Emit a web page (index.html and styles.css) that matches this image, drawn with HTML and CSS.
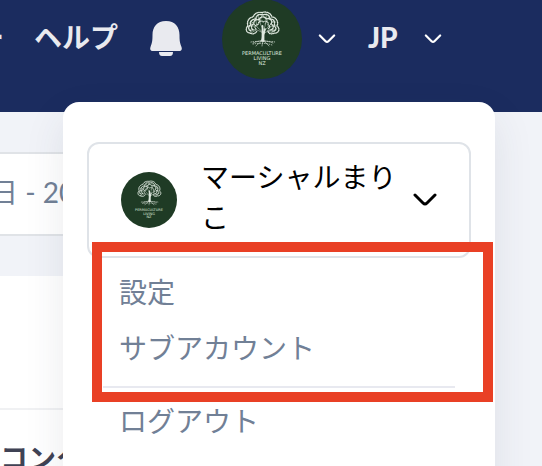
FILE: index.html
```
<!DOCTYPE html>
<html lang="ja">
<head>
    <meta charset="UTF-8">
    <meta name="viewport" content="width=device-width, initial-scale=1.0">
    <title>アカウント</title>
    <link rel="stylesheet" href="styles.css">
</head>
<body>
    <!-- Shared icons -->
    <svg class="sprite" aria-hidden="true">
        <symbol id="logo" viewBox="0 0 80 80">
            <circle cx="40" cy="40" r="40" fill="#1f3b25"/>
            <g fill="none" stroke="#dfe8df" stroke-linecap="round">
                <path d="M40 42C41 37 40.500 33 40.500 27M41.500 42C41 37 41.500 34 43 30" stroke-width="1.800"/>
                <path d="M40.500 34C37 31 33 30 27 31M40.500 33C36 29 33 26 29 22M40.500 29C38 25 36 20 36 15M41.500 31C44 26 45 20 44 15M42 32C46 29 49 25 52 21M41.500 35C45 32 49 30 54 31" stroke-width="0.500"/>
                <path d="M34 31L29 34M34 27L26 27M35 27L33 18M38 23L40.500 14M43 25L48 17M46 28L55 26M46 32L51 34M31 24L27 24M50 23L54 23M38 24L37 19" stroke-width="0.500"/>
                <path d="M28 34C24 34 23 29 26 27C24 22 28 18 31 18C33 13 38 13 40 13.500C44 12 49 14 50 18C54 18 57 23 55 27C59 30 56 35 52 34C49 36 46 34 46 32M28 34C31 36 34 34 35 32" stroke-width="1.300" stroke-dasharray="0.600 1.100"/>
                <path d="M29 32C25 30 27 26 29 26C27 22 31 20 34 20C34 15 39 15 41 16C45 14 48 17 48 20C53 20 53 24 52 27C56 29 53 33 50 32" stroke-width="1.400" stroke-dasharray="0.500 1.100"/>
                <path d="M31 31C28 28 30 25 32 25C31 21 35 20 37 21C38 17 43 17 44 20C48 18 51 22 49 25C53 27 51 31 48 31" stroke-width="1.400" stroke-dasharray="0.600 1.200"/>
                <path d="M34 30C31 27 35 25 36 26C36 22 40 21 41 23C44 21 47 23 46 26C49 27 48 30 45 30" stroke-width="1.200" stroke-dasharray="0.500 1.300"/>
                <path d="M40 41C37 43 34 42 31 44M40 41C38 45 36 44 34 47M41 41C41 44 40 45 40 47M41 41C43 44 45 44 47 47M41 41C44 43 48 42 51 44" stroke-width="0.600"/>
                <path d="M29 43C34 42 48 42 53 43M31 45C37 44 45 44 50 46" stroke-width="0.800" stroke-dasharray="0.600 1.700"/>
            </g>
            <g class="logo-text">
                <text x="40" y="56">PERMACULTURE</text>
                <text x="40" y="61">LIVING</text>
                <text x="40" y="66">NZ</text>
            </g>
        </symbol>
        <symbol id="chevron" viewBox="0 0 24 14">
            <path d="M2 2L10 10Q12 12 14 10L22 2" fill="none" stroke="currentColor" stroke-width="3" stroke-linecap="round"/>
        </symbol>
    </svg>

    <header class="topbar">
        <nav class="nav">
            <a class="nav-link nav-cut" href="#">ー</a>
            <a class="nav-link" href="#">ヘルプ</a>
            <button class="icon-btn bell" type="button" aria-label="通知">
                <svg width="32" height="36" viewBox="0 0 32 36" fill="currentColor">
                    <path d="M16 0C7 0 2.500 6 2.500 14C2.500 20 2 22 .5 26C-.5 29 1 30 3 30H29C31 30 32.500 29 31.500 26C30 22 29.500 20 29.500 14C29.500 6 25 0 16 0Z"/>
                    <path d="M9 31H23Q23 35 20 35H12Q9 35 9 31Z"/>
                </svg>
            </button>
            <button class="icon-btn account" type="button" aria-label="アカウント">
                <svg class="avatar"><use href="#logo"/></svg>
                <svg class="chevron"><use href="#chevron"/></svg>
            </button>
            <button class="icon-btn language" type="button">
                <span class="language-name">JP</span>
                <svg class="chevron"><use href="#chevron"/></svg>
            </button>
        </nav>

        <div class="dropdown">
            <button class="profile" type="button">
                <svg class="avatar-small"><use href="#logo"/></svg>
                <span class="profile-name">マーシャルまりこ</span>
                <svg class="chevron-large"><use href="#chevron"/></svg>
            </button>
            <div class="menu">
                <a href="#">設定</a>
                <a href="#">サブアカウント</a>
                <hr>
                <a href="#">ログアウト</a>
            </div>
            <div class="highlight"></div>
        </div>
    </header>

    <main>
        <input class="date-range" type="text" value="日 - 2024" aria-label="期間" readonly>
        <section class="card">
            <div class="card-top"></div>
            <h2>コンタクト</h2>
        </section>
    </main>
</body>
</html>
```

FILE: styles.css
```
* {
    box-sizing: border-box;
}

body {
    margin: 0;
    height: 100vh;
    overflow: hidden;
    background-color: #f1f3f8;
    font-family: Lato, "Noto Sans CJK JP", sans-serif;
    font-size: 28px;
    line-height: 40px;
}

button {
    border: none;
    background: none;
    padding: 0;
    font: inherit;
    cursor: pointer;
}

a {
    text-decoration: none;
}

.sprite {
    position: absolute;
    width: 0;
    height: 0;
}

.logo-text {
    fill: #dfe8df;
    font-family: "DejaVu Sans", sans-serif;
    font-size: 5px;
    font-weight: normal;
    text-anchor: middle;
}

/* Top bar */
.topbar {
    position: relative;
    z-index: 1;
    height: 112px;
    padding-bottom: 34px;
    background-color: #1b2c5f;
}

.nav {
    display: flex;
    align-items: center;
    height: 100%;
    color: #e9eaef;
    font-weight: bold;
}

.nav-link {
    padding-bottom: 4px;
    margin-right: 30px;
    color: inherit;
}

.nav-cut {
    display: flex;
    justify-content: flex-end;
    width: 4px;
}

.icon-btn {
    display: flex;
    align-items: center;
    color: inherit;
}

.bell {
    margin: 0 40px 0 2px;
}

.account {
    gap: 16px;
    margin-right: 32px;
}

.language {
    gap: 26px;
}

.language-name {
    padding-bottom: 4px;
    font-weight: 900;
}

.avatar {
    width: 80px;
    height: 80px;
}

.chevron {
    width: 18px;
    height: 10px;
    color: #fff;
}

/* Account dropdown */
.dropdown {
    position: absolute;
    top: 102px;
    left: 63px;
    right: 47px;
    padding: 40px 24px;
    border-radius: 16px;
    background-color: #fff;
    box-shadow: 0 16px 40px rgba(50, 60, 80, 0.1);
}

.profile {
    display: flex;
    align-items: center;
    width: 100%;
    padding: 13px 32px;
    border: 2px solid #dfe3e8;
    border-radius: 12px;
    color: #000;
    text-align: left;
}

.avatar-small {
    flex: none;
    width: 56px;
    height: 56px;
    margin-right: 24px;
}

.profile-name {
    flex: 1;
    padding-bottom: 6px;
}

.chevron-large {
    flex: none;
    width: 24px;
    height: 14px;
}

.menu {
    padding: 6px 16px 16px;
}

.menu a {
    display: block;
    padding: 8px 16px;
    color: #718096;
}

.menu hr {
    height: 2px;
    margin: 10px 0 5px;
    border: none;
    background-color: #e8e9f0;
}

.highlight {
    position: absolute;
    top: 140px;
    left: 29px;
    right: 2px;
    height: 160px;
    border: 10px solid #e94025;
    pointer-events: none;
}

/* Page content */
main {
    width: 80%;
}

.date-range {
    display: block;
    width: 80%;
    height: 84px;
    margin: 40px 0 40px -24px;
    padding: 0 12px 6px;
    border: 2px solid #e0e3e7;
    background-color: #fff;
    color: #718096;
    font: inherit;
}

.card {
    background-color: #fff;
}

.card-top {
    height: 134px;
    border-bottom: 2px solid #f0f1f3;
}

.card h2 {
    margin: 0;
    padding: 28px 0;
    color: #3f4254;
    font-size: 28px;
}
```
